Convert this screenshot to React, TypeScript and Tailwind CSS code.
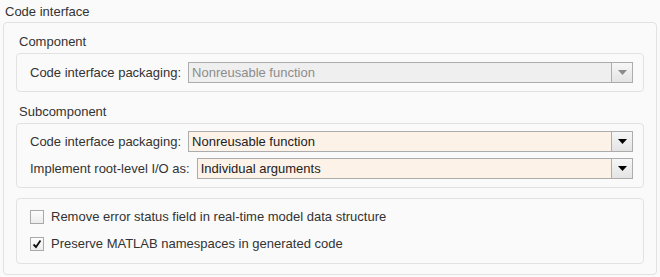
import React from "react";

function Arrow({ disabled }: { disabled?: boolean }) {
  return (
    <svg width="9" height="5" viewBox="0 0 9 5">
      <polygon points="0,0 9,0 4.5,5" fill={disabled ? "#8a8a8a" : "#000"} />
    </svg>
  );
}

function Dropdown({ value, disabled }: { value: string; disabled?: boolean }) {
  return (
    <div
      className={`flex-1 h-[21px] flex border border-[#acacac] ${
        disabled ? "bg-[#efefef]" : "bg-[#fcf2e8]"
      }`}
    >
      <div
        className={`flex-1 flex items-center pl-[3px] leading-[16px] ${
          disabled ? "text-[#8c8c8c]" : "text-[#222]"
        }`}
      >
        {value}
      </div>
      <div className="w-[21px] border-l border-[#acacac] bg-gradient-to-b from-[#f6f6f6] to-[#e4e4e4] flex items-center justify-center">
        <Arrow disabled={disabled} />
      </div>
    </div>
  );
}

function Checkbox({ checked, label }: { checked?: boolean; label: string }) {
  return (
    <div className="flex items-center h-[14px]">
      <div className="w-[14px] h-[14px] border border-[#a9a9a9] bg-gradient-to-b from-[#fdfdfd] to-[#ececec] flex items-center justify-center">
        {checked && (
          <svg width="10" height="10" viewBox="0 0 10 10">
            <path d="M1.5 5.5 L4 8 L8.5 1.5" stroke="#111" strokeWidth="1.8" fill="none" />
          </svg>
        )}
      </div>
      <span className="ml-[7px] leading-[16px]">{label}</span>
    </div>
  );
}

export default function App() {
  return (
    <div
      className="w-[660px] h-[277px] bg-[#fafafa] text-[13px] text-[#333] overflow-hidden"
      style={{ fontFamily: '"Liberation Sans", Arial, sans-serif' }}
    >
      <div className="h-[22px] pl-[5px] pt-[4px] leading-[16px]">Code interface</div>
      <div className="ml-[3px] w-[654px] h-[253px] border border-[#e2e2e2] rounded-[4px] px-[12px]">
        <div className="h-[30px] pt-[11px] pl-[3px] leading-[16px]">Component</div>
        <div className="h-[39px] border border-[#e2e2e2] rounded-[4px] pl-[13px] pr-[10px] pt-[8px]">
          <div className="flex items-center">
            <span className="mr-[7px] leading-[16px]">Code interface packaging:</span>
            <Dropdown value="Nonreusable function" disabled />
          </div>
        </div>
        <div className="h-[31px] pt-[12px] pl-[3px] leading-[16px]">Subcomponent</div>
        <div className="h-[65px] border border-[#e2e2e2] rounded-[4px] pl-[13px] pr-[10px] pt-[7px] flex flex-col gap-[6px]">
          <div className="flex items-center">
            <span className="mr-[7px] leading-[16px]">Code interface packaging:</span>
            <Dropdown value="Nonreusable function" />
          </div>
          <div className="flex items-center">
            <span className="mr-[7px] leading-[16px]">Implement root-level I/O as:</span>
            <Dropdown value="Individual arguments" />
          </div>
        </div>
        <div className="mt-[10px] h-[66px] border border-[#e2e2e2] rounded-[4px] pl-[13px] pt-[11px] flex flex-col gap-[13px]">
          <Checkbox label="Remove error status field in real-time model data structure" />
          <Checkbox checked label="Preserve MATLAB namespaces in generated code" />
        </div>
      </div>
    </div>
  );
}
